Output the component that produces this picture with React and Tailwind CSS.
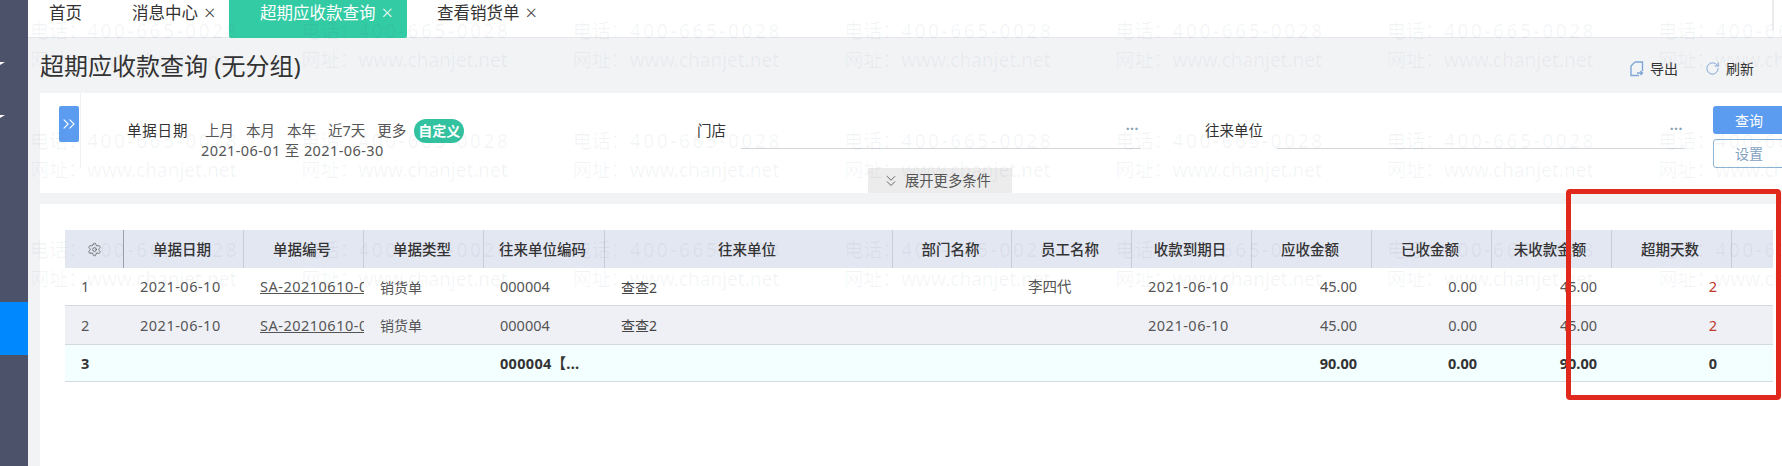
import { ChevronsRight, ChevronsDown, RotateCw, Settings } from "lucide-react";

const font = "font-['Noto_Sans','Noto_Sans_CJK_SC',sans-serif]";

const tabs = [
  { name: "首页", width: "w-[104px]", pad: "pl-[21px]", closable: false },
  { name: "消息中心", width: "w-[97px]", pad: "pl-0", closable: true },
  { name: "超期应收款查询", width: "w-[178px]", pad: "pl-[31px]", closable: true, active: true },
  { name: "查看销货单", width: "w-[160px]", pad: "pl-[30px]", closable: true },
];

const quickDates = ["上月", "本月", "本年", "近7天", "更多"];

const headers = [
  "单据日期",
  "单据编号",
  "单据类型",
  "往来单位编码",
  "往来单位",
  "部门名称",
  "员工名称",
  "收款到期日",
  "应收金额",
  "已收金额",
  "未收款金额",
  "超期天数",
];

const rows = [
  { no: 1, bg: "bg-white", staff: "李四代", height: "h-[37.5px]" },
  { no: 2, bg: "bg-[#eff0f5]", staff: "", height: "h-[39.5px]" },
];

const grid =
  "grid grid-cols-[59px_120px_120px_120px_121px_288px_119px_120px_120px_120px_120px_120px_120px_41px]";

function Watermarks() {
  const cells = [];
  for (let i = 0; i < 21; i++) cells.push(i);
  return (
    <div className="pointer-events-none absolute left-[30px] top-[17px] grid grid-cols-[repeat(7,271.4px)] auto-rows-[109.5px] text-[19px] leading-[29px] text-[#3c466e]/[0.06]">
      {cells.map((i) => (
        <div key={i} className="whitespace-nowrap">
          <div>
            电话：<span className="tracking-[2.6px]">400-665-0028</span>
          </div>
          <div>
            网址：<span>www.chanjet.net</span>
          </div>
        </div>
      ))}
    </div>
  );
}

function DotsField({ label, labelW, lineW }) {
  return (
    <div className="flex items-start">
      <span className={`${labelW} mt-[-1px] text-[14.5px] leading-[20px] text-[#333]`}>{label}</span>
      <div className={`${lineW} flex h-[28px] justify-end border-b border-[#d4d6da] pr-[2px]`}>
        <span className="text-[14px] font-bold leading-[16px] tracking-[0.5px] text-[#8aa0bb]">···</span>
      </div>
    </div>
  );
}

export default function App() {
  return (
    <div className={`${font} relative flex h-[466px] w-[1782px] overflow-hidden bg-[#f2f3f5] text-[#444]`}>
      {/* left menu, only a sliver is visible */}
      <aside className="flex w-[28px] shrink-0 flex-col bg-[#4c5269]">
        <div className="mt-[62px] h-0 w-0 border-r-[5px] border-t-[3px] border-r-transparent border-t-white" />
        <div className="mt-[50px] h-0 w-0 border-r-[5px] border-t-[3px] border-r-transparent border-t-white" />
        <div className="mt-[184px] h-[53px] bg-[#0088ff]" />
      </aside>

      <main className="flex min-w-0 flex-1 flex-col">
        <nav className="flex h-[38px] shrink-0 border-b border-[#e6e7ea] bg-white text-[16.5px] leading-[26px] text-[#333]">
          {tabs.map((tab) => (
            <div
              key={tab.name}
              className={`${tab.width} ${tab.pad} flex gap-[6px] ${
                tab.active ? "h-[38px] rounded-b-[2px] bg-[#33cba3] text-white" : ""
              }`}
            >
              <span>{tab.name}</span>
              {tab.closable && <span className={`text-[20px] font-light ${tab.active ? "text-white/90" : "text-[#444]"}`}>×</span>}
            </div>
          ))}
          <div className="ml-auto mr-[8px] h-[30px] w-[2px] bg-[#ececec]" />
        </nav>

        <div className="flex h-[55px] shrink-0 items-center justify-between pl-[12px] pr-[28px]">
          <h1 className="text-[24px] font-normal leading-[60px] text-[#333]">超期应收款查询 (无分组)</h1>
          <div className="mt-[6px] flex items-center gap-[27px] text-[14px] text-[#333]">
            <div className="flex items-center gap-[6px]">
              <svg width="14" height="16" viewBox="0 0 14 16" fill="none" stroke="#7ea6d6" strokeWidth="1.4">
                <path d="M5 1h7.5v9" />
                <path d="M5 1L1 5v9.5h8" />
                <path d="M7 12h5.5M10.5 10l2 2-2 2" />
              </svg>
              <span>导出</span>
            </div>
            <div className="flex items-center gap-[6px]">
              <RotateCw size={15} color="#7ea6d6" strokeWidth={1.6} />
              <span>刷新</span>
            </div>
          </div>
        </div>

        <section className="relative ml-[12px] flex h-[100px] shrink-0 flex-col bg-white">
          <div className="flex h-[75px]">
            <div className="ml-[19px] mt-[13px] flex h-[36px] w-[22px] items-center justify-center rounded-[2px] bg-[#5b9cf0]">
              <ChevronsRight size={20} color="#fff" strokeWidth={1.3} />
            </div>
            <div className="ml-[1px] flex flex-1 border-l border-[#f0f1f3] pl-[46px] pt-[28px]">
              <div className="w-[570px] shrink-0">
                <div className="flex h-[20px] items-center text-[14.5px] text-[#333]">
                  <span className="w-[78px] tracking-[0.8px]">单据日期</span>
                  <div className="flex gap-[12px]">
                    {quickDates.map((d) => (
                      <span key={d} className="text-[#555]">
                        {d}
                      </span>
                    ))}
                  </div>
                  <span className="ml-[8px] rounded-[12px] bg-[#33c2a0] px-[4px] text-[14px] font-bold leading-[24px] text-white">
                    自定义
                  </span>
                </div>
                <div className="ml-[74px] mt-[-1px] text-[14.5px] leading-[20px] tracking-[0.4px] text-[#555]">
                  2021-06-01 至 2021-06-30
                </div>
              </div>
              <DotsField label="门店" labelW="w-[44px]" lineW="w-[400px]" />
              <div className="w-[64px]" />
              <DotsField label="往来单位" labelW="w-[72px]" lineW="w-[408px]" />
              <div className="ml-[28px] mt-[-15px] flex w-[72px] shrink-0 flex-col gap-[5px] text-[14px]">
                <div className="flex h-[29px] items-center justify-center rounded-l-[3px] bg-[#5b9cf0] text-white">查询</div>
                <div className="flex h-[29px] items-center justify-center rounded-l-[3px] border border-[#8db5d6] text-[#7f9fbf]">设置</div>
              </div>
            </div>
          </div>
          <div className="ml-[828px] flex h-[25px] w-[144px] items-center gap-[5px] bg-[#ececec] pl-[14px] text-[14.3px] text-[#555]">
            <ChevronsDown size={18} color="#555" strokeWidth={1.2} />
            <span>展开更多条件</span>
          </div>
        </section>

        <section className="ml-[12px] mt-[11px] flex-1 bg-white pl-[25px] pt-[26px]">
          <div className={`${grid} h-[38px] w-[1708px] bg-[#e3e7f2] text-[14.5px] font-medium text-[#333]`}>
            <div className="flex items-center justify-center border-r border-[#9aa0ad]">
              <Settings size={15} color="#555" strokeWidth={1.2} />
            </div>
            {headers.map((h) => (
              <div key={h} className="flex items-center justify-center border-r border-[#c9cdd8] pr-[3px] pt-[1px]">
                {h}
              </div>
            ))}
            <div />
          </div>

          {rows.map((row) => (
            <div
              key={row.no}
              className={`${grid} ${row.bg} ${row.height} w-[1708px] items-center border-b border-[#d5d8df] pt-[2px] text-[14.5px] text-[#555]`}
            >
              <div className="pl-[16px]">{row.no}</div>
              <div className="pl-[16px] tracking-[0.5px]">2021-06-10</div>
              <div className="overflow-hidden whitespace-nowrap pl-[16px] tracking-[0.5px] underline">SA-20210610-0001</div>
              <div className="pl-[16px] text-[14px]">销货单</div>
              <div className="pl-[16px]">000004</div>
              <div className="pl-[16px] text-[14px] text-[#444]">查查2</div>
              <div />
              <div className="pl-[16px]">{row.staff}</div>
              <div className="pl-[16px] tracking-[0.5px]">2021-06-10</div>
              <div className="pr-[15px] text-right">45.00</div>
              <div className="pr-[15px] text-right">0.00</div>
              <div className="pr-[15px] text-right">45.00</div>
              <div className="pr-[15px] text-right text-[#c0392b]">2</div>
              <div />
            </div>
          ))}

          <div className={`${grid} h-[37px] w-[1708px] items-center border-b border-[#d5d8df] bg-[#f3fffe] pt-[2px] text-[14.5px] font-bold text-[#333]`}>
            <div className="pl-[16px]">3</div>
            <div />
            <div />
            <div />
            <div className="pl-[16px] tracking-[0.3px]">000004【...</div>
            <div />
            <div />
            <div />
            <div />
            <div className="pr-[15px] text-right">90.00</div>
            <div className="pr-[15px] text-right">0.00</div>
            <div className="pr-[15px] text-right">90.00</div>
            <div className="pr-[15px] text-right">0</div>
            <div />
          </div>
        </section>
      </main>

      <Watermarks />

      {/* red annotation drawn over the screenshot */}
      <div className="pointer-events-none absolute left-[1566px] top-[189px] h-[211px] w-[215px] rounded-[4px] border-[5px] border-[#e0281c]" />
    </div>
  );
}
